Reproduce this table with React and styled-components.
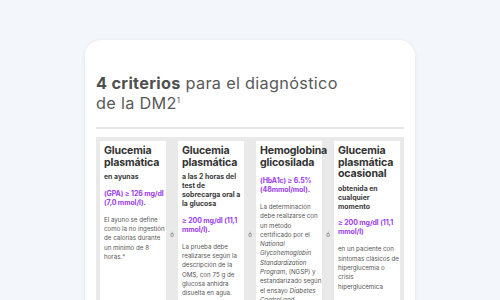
import React from "react";
import styled, { createGlobalStyle } from "styled-components";

const Global = createGlobalStyle`
  html, body { margin: 0; padding: 0; }
  body {
    background: #f3f6fa;
    font-family: Inter, "Noto Sans", sans-serif;
    overflow: hidden;
  }
`;

const Page = styled.div`
  padding: 40px 0 0 85px;
`;

const Card = styled.section`
  width: 330px;
  box-sizing: border-box;
  background: #ffffff;
  border-radius: 16px;
  padding: 33px 11px 20px 11px;
  box-shadow: 0 1px 4px rgba(40, 50, 80, 0.10);
`;

const Title = styled.h2`
  margin: 0;
  font-size: 16.3px;
  line-height: 20px;
  font-weight: 400;
  color: #595959;
  letter-spacing: 0.3px;
  b { font-weight: 700; color: #4f4f4f; }
  sup { font-size: 8px; vertical-align: 6px; line-height: 0; }
`;

const Divider = styled.hr`
  margin: 14px 0 0 0;
  border: 0;
  height: 2px;
  background: #e7e7e7;
`;

const Grid = styled.div`
  margin-top: 8px;
  background: #e9e9e9;
  padding: 4px;
  display: flex;
  align-items: stretch;
`;

const Column = styled.div`
  width: 66px;
  flex: 0 0 66px;
  box-sizing: border-box;
  background: #ffffff;
  padding: 4px 4px 6px 4px;
`;

const Sep = styled.div`
  flex: 1 0 12px;
  display: flex;
  align-items: center;
  justify-content: center;
  font-size: 6px;
  color: #666;
`;

const Head = styled.div`
  font-size: 10.6px;
  line-height: 11.7px;
  font-weight: 700;
  color: #333;
  letter-spacing: -0.15px;
  white-space: nowrap;
`;

const Sub = styled.div`
  margin-top: 3.8px;
  font-size: 6.9px;
  line-height: 9px;
  font-weight: 700;
  color: #3a3a3a;
  white-space: nowrap;
`;

const Value = styled.div`
  margin-top: 7.5px;
  font-size: 7px;
  line-height: 9px;
  font-weight: 700;
  color: #9b3cf0;
  white-space: nowrap;
  letter-spacing: -0.1px;
`;

const Body = styled.div`
  margin-top: 8px;
  font-size: 6.2px;
  line-height: 9.3px;
  color: #555;
  white-space: nowrap;
  i { font-style: italic; }
`;

export default function App() {
  return (
    <>
      <Global />
      <Page>
        <Card>
          <Title>
            <b>4 criterios</b> para el diagnóstico
            <br />
            de la DM2<sup>1</sup>
          </Title>
          <Divider />
          <Grid>
            <Column>
              <Head>Glucemia<br />plasmática</Head>
              <Sub>en ayunas</Sub>
              <Value>(GPA) ≥ 126 mg/dl<br />(7,0 mmol/l).</Value>
              <Body>
                El ayuno se define<br />como la no ingestión<br />de calorías durante<br />un mínimo de 8<br />horas.*
              </Body>
            </Column>
            <Sep>ó</Sep>
            <Column>
              <Head>Glucemia<br />plasmática</Head>
              <Sub>a las 2 horas del<br />test de<br />sobrecarga oral a<br />la glucosa</Sub>
              <Value>≥ 200 mg/dl (11,1<br />mmol/l).</Value>
              <Body>
                La prueba debe<br />realizarse según la<br />descripción de la<br />OMS, con 75 g de<br />glucosa anhidra<br />disuelta en agua.
              </Body>
            </Column>
            <Sep>ó</Sep>
            <Column>
              <Head>Hemoglobina<br />glicosilada</Head>
              <Value>(HbA1c) ≥  6.5%<br />(48mmol/mol).</Value>
              <Body>
                La determinación<br />debe realizarse con<br />un método<br />certificado por el<br /><i>National</i><br /><i>Glycohemoglobin</i><br /><i>Standardization</i><br /><i>Program</i>, (NGSP) y<br />estandarizado según<br />el ensayo <i>Diabetes</i><br /><i>Control and</i><br /><i>Complications Trial</i><br />(DCCT).
              </Body>
            </Column>
            <Sep>ó</Sep>
            <Column>
              <Head>Glucemia<br />plasmática<br />ocasional</Head>
              <Sub>obtenida en<br />cualquier<br />momento</Sub>
              <Value>≥ 200 mg/dl (11,1<br />mmol/l)</Value>
              <Body>
                en un paciente con<br />síntomas clásicos de<br />hiperglucemia o<br />crisis<br />hiperglucémica
              </Body>
            </Column>
          </Grid>
        </Card>
      </Page>
    </>
  );
}
